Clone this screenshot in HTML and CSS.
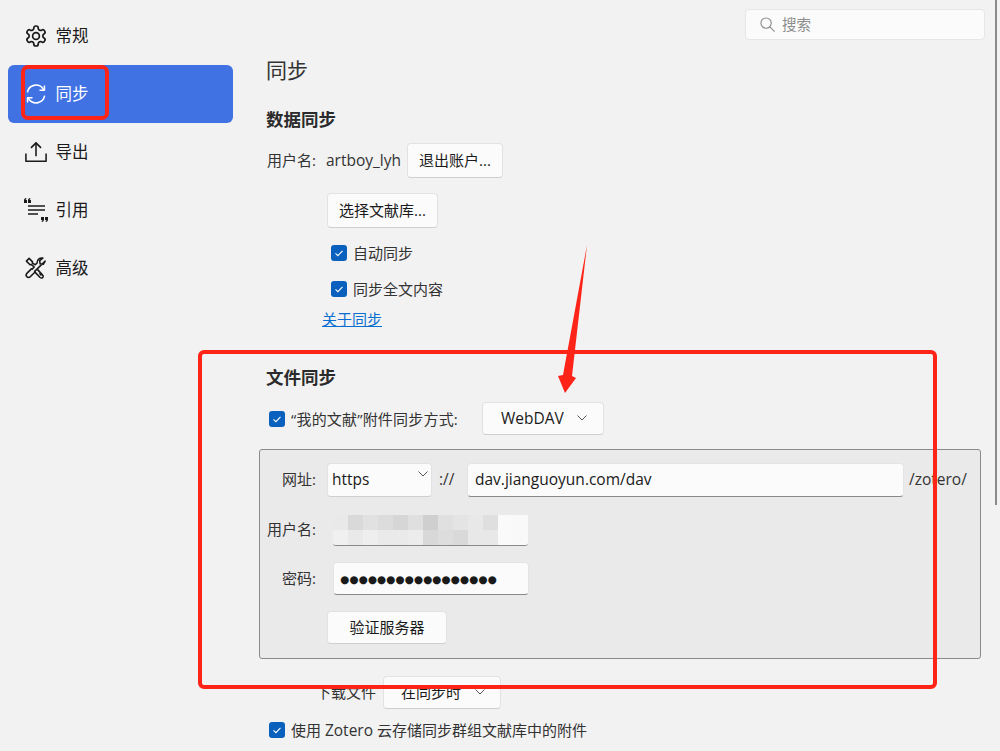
FILE: index.html
```html
<!DOCTYPE html>
<html lang="zh-CN">
<head>
<meta charset="utf-8">
<title>同步</title>
<link rel="stylesheet" href="styles.css">
</head>
<body>
<div class="app">
  <nav class="sidebar">
    <div class="nav-item">
      <svg class="nav-icon" viewBox="1 1 22 22"><path d="M12.22 2h-.44a2 2 0 0 0-2 2v.18a2 2 0 0 1-1 1.73l-.43.25a2 2 0 0 1-2 0l-.15-.08a2 2 0 0 0-2.73.73l-.22.38a2 2 0 0 0 .73 2.73l.15.1a2 2 0 0 1 1 1.72v.51a2 2 0 0 1-1 1.74l-.15.09a2 2 0 0 0-.73 2.73l.22.38a2 2 0 0 0 2.73.73l.15-.08a2 2 0 0 1 2 0l.43.25a2 2 0 0 1 1 1.73V20a2 2 0 0 0 2 2h.44a2 2 0 0 0 2-2v-.18a2 2 0 0 1 1-1.73l.43-.25a2 2 0 0 1 2 0l.15.08a2 2 0 0 0 2.73-.73l.22-.39a2 2 0 0 0-.73-2.73l-.15-.08a2 2 0 0 1-1-1.74v-.5a2 2 0 0 1 1-1.74l.15-.09a2 2 0 0 0 .73-2.73l-.22-.38a2 2 0 0 0-2.73-.73l-.15.08a2 2 0 0 1-2 0l-.43-.25a2 2 0 0 1-1-1.73V4a2 2 0 0 0-2-2z"/><circle cx="12" cy="12" r="3.400"/></svg>
      <span>常规</span>
    </div>
    <div class="nav-item active">
      <svg class="nav-icon" viewBox="0 0 24 24"><path d="M2.600 10.200A9.500 9.500 0 0 1 19.600 6.200L21 8"/><path d="M21.200 2.600V8h-5.400"/><path d="M21.400 13.800A9.500 9.500 0 0 1 4.400 17.800L3 16"/><path d="M2.800 21.400V16h5.400"/></svg>
      <span>同步</span>
    </div>
    <div class="nav-item">
      <svg class="nav-icon" viewBox="0 0 24 24"><path d="M12 16.500V2"/><path d="M6.500 7.500 12 2l5.500 5.500"/><path d="M1 13.500V22h22v-8.500"/></svg>
      <span>导出</span>
    </div>
    <div class="nav-item">
      <svg class="nav-icon nav-icon-cite" viewBox="0 0 22 22"><path class="thin" d="M3 7h17M3 11h17M3 15h10"/><path class="solid" d="M-1 4V1.500C-1 0-.2-.7 1.300-1V.2C.7.300.6.800.6 1H2v3zM3 4V1.500C3 0 3.800-.7 5.300-1V.2C4.700.300 4.600.800 4.600 1H6v3zM16 18h3v2.500c0 1.500-.8 2.200-2.300 2.500v-1.200c.6-.1.7-.6.7-.8H16zM20 18h3v2.500c0 1.500-.8 2.200-2.300 2.500v-1.200c.6-.1.7-.6.7-.8H20z"/></svg>
      <span>引用</span>
    </div>
    <div class="nav-item item-last">
      <svg class="nav-icon" viewBox="0 0 24 24"><path d="M4.500 1.500 1.500 4.500l4 4 1.500-.3L10 11l-2.200 2.200-.8-.3-5 5c-.9 1-.9 2.700 0 3.700s2.700 1 3.700 0l5-5-.2-.9L22 4.500l-2 3.500-3.500-.5L16 4l3.500-2.800c-3-.8-6.500 1.300-6.300 5.300l-2 2L8 6.700l.2-1.400z"/><path d="M13.500 13.500 19 19.500c1 1 1.200 2.200.2 3s-2 .5-3-.4l-5.500-5.900"/><path d="M15.800 17.800l2.200 2.400"/></svg>
      <span>高级</span>
    </div>
  </nav>

  <main class="main">
    <div class="search-row">
      <div class="search">
        <svg class="search-icon" viewBox="0 0 16 16"><circle cx="6.500" cy="6.500" r="5.500"/><path d="m10.500 10.500 5 5"/></svg>
        <span>搜索</span>
      </div>
    </div>

    <h1 class="title">同步</h1>

    <h2 class="section data-head">数据同步</h2>
    <div class="row account">
      <span class="text-up">用户名:</span>
      <span class="account-name latin text-up">artboy_lyh</span>
      <button class="btn btn-logout">退出账户...</button>
    </div>
    <button class="btn btn-library">选择文献库...</button>
    <label class="check check-auto"><span class="box-tick"><svg viewBox="0 0 16 16"><path d="m4.500 8.300 2.400 2.300 4.600-4.800"/></svg></span>自动同步</label>
    <label class="check check-full"><span class="box-tick"><svg viewBox="0 0 16 16"><path d="m4.500 8.300 2.400 2.300 4.600-4.800"/></svg></span>同步全文内容</label>
    <a class="link" href="#">关于同步</a>

    <h2 class="section file-head">文件同步</h2>
    <div class="row method">
      <label class="check check-inline"><span class="box-tick"><svg viewBox="0 0 16 16"><path d="m4.500 8.300 2.400 2.300 4.600-4.800"/></svg></span>“我的文献”附件同步方式:</label>
      <div class="dropdown dd-webdav latin">WebDAV<svg class="chev" viewBox="0 0 10 6"><path d="m.5.500 4.500 4.500L9.500.500"/></svg></div>
    </div>

    <section class="panel">
      <div class="panel-row row-url">
        <span class="panel-label">网址:</span>
        <div class="dropdown dd-scheme latin">https<svg class="chev" viewBox="0 0 10 6"><path d="m.5.500 4.500 4.500L9.500.500"/></svg></div>
        <span class="sep latin text-up">://</span>
        <div class="field field-url latin">dav.jianguoyun.com/dav</div>
        <span class="suffix latin text-up">/zotero/</span>
      </div>
      <div class="panel-row row-user">
        <span class="panel-label">用户名:</span>
        <div class="pixelated"></div>
      </div>
      <div class="panel-row row-pass">
        <span class="panel-label">密码:</span>
        <div class="field field-pass">●●●●●●●●●●●●●●●●●</div>
      </div>
      <button class="btn btn-verify">验证服务器</button>
    </section>

    <div class="row download">
      <span class="text-up">下载文件</span>
      <div class="dropdown dd-download">在同步时<svg class="chev" viewBox="0 0 10 6"><path d="m.5.500 4.500 4.500L9.500.500"/></svg></div>
    </div>
    <label class="check check-group"><span class="box-tick"><svg viewBox="0 0 16 16"><path d="m4.500 8.300 2.400 2.300 4.600-4.800"/></svg></span><span>使用 <span class="latin">Zotero</span> 云存储同步群组文献库中的附件</span></label>
  </main>
</div>

<div class="scrollbar"></div>

<svg class="annotations" viewBox="0 0 1000 751">
  <rect class="mark" x="23" y="67" width="84" height="51" rx="5"/>
  <rect class="mark" x="200" y="352" width="735" height="335" rx="4"/>
  <polygon class="mark-fill" points="587,245 572,376 576,378 565,393 558,376 563,375"/>
</svg>
</body>
</html>
```

FILE: styles.css
```css
* { box-sizing: border-box; }

html, body {
  margin: 0;
  height: 751px;
  overflow: hidden;
}

body {
  position: relative;
  background: #f2f2f2;
  color: #333;
  font-family: "Open Sans", "Noto Sans CJK SC", sans-serif;
  font-size: 15px;
  line-height: 20px;
}

.latin { font-size: 15.500px; }
.text-up { padding-bottom: 2px; }

.app { display: flex; height: 751px; }

/* Sidebar */
.sidebar {
  width: 241px;
  flex: none;
  padding: 7px 8px 0;
}

.nav-item {
  display: flex;
  align-items: center;
  gap: 8.500px;
  height: 58px;
  padding-left: 17px;
  border-radius: 6px;
  color: #1a1a1a;
  font-size: 16.500px;
}

.nav-item.active { background: #4072e4; color: #fff; }
.item-last { height: 57px; }

.nav-icon {
  width: 22px;
  height: 22px;
  flex: none;
  overflow: visible;
  fill: none;
  stroke: currentColor;
  stroke-width: 1.700;
  stroke-linejoin: round;
}

.nav-icon-cite .thin { stroke-width: 1.500; }
.nav-icon-cite .solid { fill: currentColor; stroke: none; }

/* Main column */
.main {
  flex: 1;
  min-width: 0;
  padding-left: 18px;
  padding-top: 9px;
}

.search-row { display: flex; justify-content: flex-end; padding-right: 15px; }

.search {
  display: flex;
  align-items: center;
  gap: 7px;
  width: 240px;
  height: 31px;
  padding-left: 14px;
  background: #fbfbfb;
  border: 1px solid #e6e6e6;
  border-radius: 4px;
  color: #8c8c8c;
  font-size: 14.500px;
}

.search-icon {
  width: 15px;
  height: 15px;
  fill: none;
  stroke: #8c8c8c;
  stroke-width: 1.200;
}

.title {
  margin: 15px 0 0 7px;
  font-size: 21px;
  font-weight: 400;
  line-height: 30px;
}

.section {
  margin: 0 0 0 7px;
  font-size: 17.500px;
  font-weight: 700;
  line-height: 24px;
  color: #2b2b2b;
}

.data-head { margin-top: 22px; }
.file-head { margin-top: 36px; }

.row { display: flex; align-items: center; }

.account { margin: 12px 0 0 8px; height: 35px; }
.account-name { margin-left: 10px; }

.btn {
  display: block;
  height: 35px;
  padding: 0 0 2px;
  background: #fbfbfb;
  border: 1px solid #e2e2e2;
  border-bottom-color: #cfcfcf;
  border-radius: 4px;
  color: #1a1a1a;
  font: inherit;
  font-size: 15px;
}

.btn-logout { width: 96px; margin-left: 6px; }
.btn-library { width: 111px; margin: 15px 0 0 68px; }
.btn-verify { width: 120px; height: 33px; margin: 16px 0 0 67px; }

.check { display: flex; align-items: center; gap: 6px; height: 16px; }
.check-auto { margin: 17px 0 0 72px; }
.check-full { margin: 20px 0 0 72px; }
.check-inline { margin-left: 10px; letter-spacing: .2px; }
.check-group { margin: 13px 0 0 10px; }

.box-tick {
  width: 16px;
  height: 16px;
  flex: none;
  background: #0a60bd;
  border-radius: 3px;
}

.box-tick svg {
  display: block;
  width: 16px;
  height: 16px;
  fill: none;
  stroke: #fff;
  stroke-width: 1.100;
}

.link {
  display: block;
  width: max-content;
  margin: 12px 0 0 63px;
  color: #0a6ed1;
  line-height: 20px;
  text-decoration: underline;
}

.method { margin-top: 13px; height: 33px; }

.dropdown {
  position: relative;
  display: flex;
  align-items: center;
  height: 33px;
  padding-bottom: 2px;
  background: #fbfbfb;
  border: 1px solid #e2e2e2;
  border-bottom-color: #cfcfcf;
  border-radius: 4px;
  color: #1a1a1a;
}

.chev {
  position: absolute;
  width: 10px;
  height: 6px;
  fill: none;
  stroke: #555;
  stroke-width: 1;
}

.dd-webdav { width: 122px; margin-left: 24px; padding-left: 18px; }
.dd-webdav .chev { right: 16px; top: 12px; }

.dd-scheme { width: 105px; height: 34px; padding-left: 4px; }
.dd-scheme .chev { right: 3px; top: 7px; }

.dd-download { width: 118px; padding-left: 17px; }
.dd-download .chev { right: 15px; top: 12px; }

/* Inset WebDAV panel */
.panel {
  width: 722px;
  height: 210px;
  margin-top: 14px;
  padding-top: 13px;
  background: #eaeaea;
  border: 1px solid #8a8a8a;
  border-radius: 3px;
}

.panel-row { display: flex; align-items: center; }

.panel-label {
  width: 56px;
  flex: none;
  margin-right: 11px;
  padding-bottom: 2px;
  text-align: right;
}

.field {
  display: flex;
  align-items: center;
  background: #fbfbfb;
  border: 1px solid #e4e4e4;
  border-bottom-color: #8a8a8a;
  border-radius: 4px;
  color: #1a1a1a;
}

.row-url { height: 34px; }
.sep { margin: 0 8px 0 7px; width: 20px; }
.field-url { width: 437px; height: 34px; padding: 0 0 2px 7px; }
.suffix { margin-left: 5px; }

.row-user { margin-top: 18px; height: 30px; }

.pixelated {
  width: 195px;
  height: 31px;
  margin-left: 6px;
  border-bottom: 1px solid #8a8a8a;
  border-radius: 0 0 3px 3px;
  background-repeat: no-repeat;
  background-size: 100% 15px;
  background-position: 0 0, 0 15px;
  background-image:
    linear-gradient(to right,
      #e9e9e9 0 15px, #d9d9d9 15px 30px, #e1e1e1 30px 45px, #dcdcdc 45px 60px, #d6d6d6 60px 75px,
      #dfdfdf 75px 90px, #cfcfcf 90px 105px, #e0e0e0 105px 120px, #e4e4e4 120px 135px, #e8e8e8 135px 150px,
      #dfdfdf 150px 165px, #fafafa 165px 180px, #f9f9f9 180px 195px),
    linear-gradient(to right,
      #f0f0f0 0 15px, #e9e9e9 15px 30px, #eeeeee 30px 45px, #eaeaea 45px 75px, #ececec 75px 90px,
      #d8d8d8 90px 105px, #dddddd 105px 120px, #d9d9d9 120px 135px, #e8e8e8 135px 165px,
      #fafafa 165px 180px, #f9f9f9 180px 195px);
}

.row-pass { margin-top: 17px; height: 33px; }

.field-pass {
  width: 196px;
  height: 33px;
  margin-left: 6px;
  padding-left: 6px;
  font-family: "DejaVu Sans", sans-serif;
  font-size: 10.500px;
  letter-spacing: .05px;
}

.download { margin: 17px 0 0 57px; height: 33px; gap: 7px; }

/* Overlays */
.scrollbar {
  position: absolute;
  top: 0;
  right: 3px;
  width: 2px;
  height: 505px;
  background: #8a8a8a;
}

.annotations {
  position: absolute;
  inset: 0;
  width: 1000px;
  height: 751px;
  pointer-events: none;
}

.mark { fill: none; stroke: #ff2418; stroke-width: 4; }
.mark-fill { fill: #ff2418; }
```
